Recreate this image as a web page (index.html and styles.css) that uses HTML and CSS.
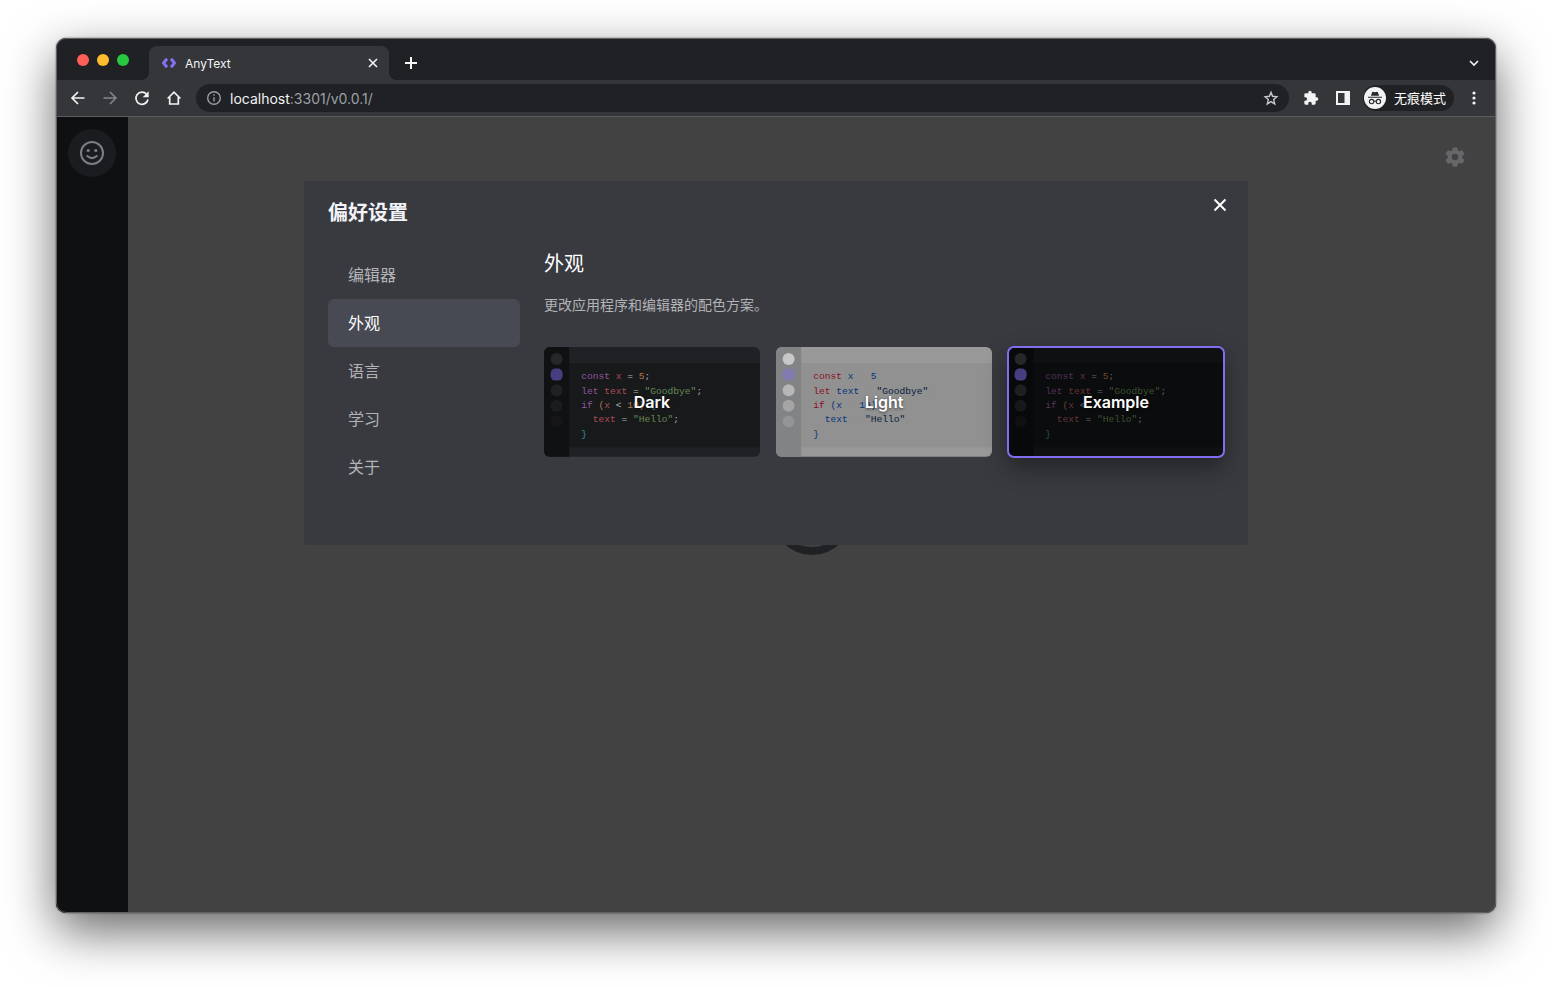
FILE: index.html
```html
<!DOCTYPE html>
<html lang="zh-CN">
<head>
<meta charset="utf-8">
<meta name="viewport" content="width=device-width, initial-scale=1">
<title>AnyText</title>
<link rel="stylesheet" href="styles.css">
</head>
<body>
<div class="window">
  <header class="tabstrip">
    <div class="lights"><span class="light red"></span><span class="light yellow"></span><span class="light green"></span></div>
    <div class="tab">
      <svg class="tab-logo" viewBox="0 0 16 16" fill="none" stroke="#8371f2" stroke-width="3" stroke-linejoin="round"><path d="M6 3.800 2.500 8 6 12.200M10 3.800 13.500 8 10 12.200"/></svg>
      <span class="tab-title">AnyText</span>
      <button class="icon-btn tab-close" aria-label="关闭标签页"><svg width="16" height="16" viewBox="0 0 16 16" fill="none" stroke="#f1f3f4" stroke-width="1.6"><path d="m4 4 8 8M12 4l-8 8"/></svg></button>
    </div>
    <button class="icon-btn new-tab" aria-label="新标签页"><svg width="16" height="16" viewBox="0 0 16 16" fill="none" stroke="#f8f8f8" stroke-width="2"><path d="M8 2v12M2 8h12"/></svg></button>
    <button class="icon-btn tab-search" aria-label="搜索标签页"><svg width="16" height="16" viewBox="0 0 16 16" fill="none" stroke="#f1f3f4" stroke-width="1.6"><path d="m4 6 4 4 4-4"/></svg></button>
  </header>
  <nav class="toolbar" aria-label="浏览器">
    <div class="nav-buttons">
      <button class="icon-btn" aria-label="后退"><svg width="16" height="16" viewBox="0 0 16 16" fill="none" stroke="#f1f3f4" stroke-width="1.7"><path d="M14.500 8H2.500M8 2 2 8l6 6"/></svg></button>
      <button class="icon-btn" aria-label="前进"><svg width="16" height="16" viewBox="0 0 16 16" fill="none" stroke="#85878a" stroke-width="1.5"><path d="M1.500 8h12M8 2l6 6-6 6"/></svg></button>
      <button class="icon-btn" aria-label="刷新"><svg width="16" height="16" viewBox="0 0 16 16"><path d="M14 9.500A6.100 6.100 0 1 1 12.700 4.200" fill="none" stroke="#f1f3f4" stroke-width="1.700"/><path d="M14.700 1.200v6H8.700z" fill="#f1f3f4"/></svg></button>
      <button class="icon-btn" aria-label="主页"><svg width="16" height="16" viewBox="0 0 16 16" fill="none" stroke="#f1f3f4" stroke-width="1.7"><path d="M1.600 8.500 8 2.200l6.400 6.300M3.700 7v7h8.600V7"/></svg></button>
    </div>
    <div class="address">
      <svg width="16" height="16" viewBox="0 0 16 16" fill="none" stroke="#9b9da1" stroke-width="1.4"><circle cx="8" cy="8" r="6.3"/><path d="M8 7.2v4.2M8 4.3v1.5"/></svg>
      <span class="url"><span class="host">localhost</span>:3301/v0.0.1/</span>
      <button class="icon-btn star" aria-label="添加书签"><svg width="16" height="16" viewBox="0 0 16 16" fill="none" stroke="#c5c7ca" stroke-width="1.4"><path d="m8 2.300 1.600 4 4.300.4-3.200 2.900 1 4.300L8 11.600l-3.700 2.300 1-4.300-3.200-2.900 4.300-.4z"/></svg></button>
    </div>
    <div class="tools">
      <button class="icon-btn" aria-label="扩展程序"><svg width="16" height="16" viewBox="0 0 24 24" fill="#f1f3f4"><path d="M20.5 11H19V7a2 2 0 0 0-2-2h-4V3.500a2.500 2.500 0 0 0-5 0V5H4a2 2 0 0 0-2 2v3.800h1.500a2.700 2.700 0 0 1 0 5.400H2V20a2 2 0 0 0 2 2h3.800v-1.500a2.700 2.700 0 0 1 5.400 0V22H17a2 2 0 0 0 2-2v-4h1.500a2.500 2.500 0 0 0 0-5z"/></svg></button>
      <button class="icon-btn" aria-label="侧边栏"><svg width="16" height="16" viewBox="0 0 16 16"><path d="M1 1h14v14H1zm2 2v10h6.500V3z" fill="#f1f3f4" fill-rule="evenodd"/></svg></button>
      <button class="profile"><svg width="22" height="22" viewBox="0 0 22 22"><circle cx="11" cy="11" r="11" fill="#f1f3f4"/><path d="M8.400 4.700 11 5.200l2.600-.5 1.500 4H6.900z" fill="#27282c"/><g fill="none" stroke="#27282c" stroke-width="1.100"><path d="M4 10.200h14M9.700 14.400q1.300-.8 2.600 0"/><circle cx="7.600" cy="14.600" r="2.200"/><circle cx="14.400" cy="14.600" r="2.200"/></g></svg><span>无痕模式</span></button>
      <button class="icon-btn" aria-label="更多"><svg width="16" height="16" viewBox="0 0 16 16" fill="#f1f3f4"><circle cx="8" cy="3" r="1.600"/><circle cx="8" cy="8" r="1.600"/><circle cx="8" cy="13" r="1.600"/></svg></button>
    </div>
  </nav>
  <div class="app">
    <aside class="sidebar">
      <button class="avatar" aria-label="用户"><svg width="24" height="24" viewBox="0 0 24 24" fill="none" stroke="#7c7d80" stroke-width="2"><circle cx="12" cy="12" r="11"/><path d="M7.200 15q4.800 4.200 9.600 0" stroke-linecap="round"/><g fill="#7c7d80" stroke="none"><circle cx="8.200" cy="9.500" r="1.600"/><circle cx="15.800" cy="9.500" r="1.600"/></g></svg></button>
    </aside>
    <main class="stage">
      <div class="ring"></div>
      <button class="settings" aria-label="设置"><svg width="24" height="24" viewBox="0 0 24 24" fill="#66676a"><path d="M19.140 12.940c.04-.3.06-.61.06-.94s-.02-.64-.07-.94l2.030-1.580a.49.49 0 0 0 .12-.61l-1.920-3.320a.49.49 0 0 0-.59-.22l-2.390.96a7 7 0 0 0-1.620-.94l-.36-2.540a.48.48 0 0 0-.48-.41h-3.840a.48.48 0 0 0-.47.41l-.36 2.540a7.300 7.300 0 0 0-1.620.94l-2.390-.96a.48.48 0 0 0-.59.22L2.740 8.870a.48.48 0 0 0 .12.610l2.030 1.580a6 6 0 0 0 0 1.880l-2.030 1.580a.49.49 0 0 0-.12.610l1.920 3.320c.12.220.37.290.59.220l2.390-.96c.5.380 1.030.7 1.620.94l.36 2.540c.05.240.24.410.48.410h3.840c.24 0 .44-.17.470-.41l.36-2.540a7 7 0 0 0 1.620-.94l2.390.96c.22.080.47 0 .59-.22l1.920-3.320a.48.48 0 0 0-.12-.61zM12 15.200a3.200 3.200 0 1 1 0-6.400 3.200 3.200 0 0 1 0 6.400z"/></svg></button>
    </main>
    <div class="overlay">
      <section class="modal" role="dialog" aria-labelledby="modal-title">
        <h1 class="modal-title" id="modal-title">偏好设置</h1>
        <button class="icon-btn modal-close" aria-label="关闭"><svg width="16" height="16" viewBox="0 0 16 16" fill="none" stroke="#fff" stroke-width="2"><path d="m2.500 2.500 11 11M13.500 2.500l-11 11"/></svg></button>
        <div class="modal-body">
          <nav class="menu" aria-label="设置分类">
            <button class="menu-item">编辑器</button>
            <button class="menu-item active" aria-current="page">外观</button>
            <button class="menu-item">语言</button>
            <button class="menu-item">学习</button>
            <button class="menu-item">关于</button>
          </nav>
          <div class="panel">
            <h2 class="panel-title">外观</h2>
            <p class="panel-desc">更改应用程序和编辑器的配色方案。</p>
            <div class="themes">
              <button class="theme dark" aria-pressed="false">
                <svg class="preview" viewBox="0 0 360 183" preserveAspectRatio="xMidYMid slice" aria-hidden="true">
                  <path class="bar" d="M0 0h360v183H0z"/><path class="editor" d="M42 27h318v140H42z"/><path class="rail" d="M0 0h42v183H0z"/>
                  <circle class="dot d1" cx="21" cy="20" r="10"/><rect class="accent" x="11" y="36" width="20" height="20" rx="8"/><circle class="dot d2" cx="21" cy="72" r="10"/><circle class="dot d3" cx="21" cy="98" r="10"/><circle class="dot d4" cx="21" cy="124" r="10"/>
                  <text x="62" y="54"><tspan class="k">const</tspan> <tspan class="v">x</tspan> <tspan class="o">=</tspan> <tspan class="n">5</tspan><tspan class="o">;</tspan></text>
                  <text x="62" y="78"><tspan class="k">let</tspan> <tspan class="v">text</tspan> <tspan class="o">=</tspan> <tspan class="s">"Goodbye"</tspan><tspan class="o">;</tspan></text>
                  <text x="62" y="102"><tspan class="k">if</tspan> <tspan class="n">(</tspan><tspan class="v">x</tspan> <tspan class="o">&lt;</tspan> <tspan class="n">10)</tspan> <tspan class="b">{</tspan></text>
                  <text x="62" y="125">&#160; <tspan class="v">text</tspan> <tspan class="o">=</tspan> <tspan class="s">"Hello"</tspan><tspan class="o">;</tspan></text>
                  <text x="62" y="150" class="b">}</text>
                </svg>
                <span class="theme-name">Dark</span>
              </button>
              <button class="theme bright" aria-pressed="false">
                <svg class="preview" viewBox="0 0 360 183" preserveAspectRatio="xMidYMid slice" aria-hidden="true">
                  <path class="bar" d="M0 0h360v183H0z"/><path class="editor" d="M42 27h318v140H42z"/><path class="rail" d="M0 0h42v183H0z"/>
                  <circle class="dot d1" cx="21" cy="20" r="10"/><rect class="accent" x="11" y="36" width="20" height="20" rx="8"/><circle class="dot d2" cx="21" cy="72" r="10"/><circle class="dot d3" cx="21" cy="98" r="10"/><circle class="dot d4" cx="21" cy="124" r="10"/>
                  <text x="62" y="54"><tspan class="k">const</tspan> <tspan class="v">x</tspan> <tspan class="o">=</tspan> <tspan class="n">5</tspan><tspan class="o">;</tspan></text>
                  <text x="62" y="78"><tspan class="k">let</tspan> <tspan class="v">text</tspan> <tspan class="o">=</tspan> <tspan class="s">"Goodbye"</tspan><tspan class="o">;</tspan></text>
                  <text x="62" y="102"><tspan class="k">if</tspan> <tspan class="n">(</tspan><tspan class="v">x</tspan> <tspan class="o">&lt;</tspan> <tspan class="n">10)</tspan></text>
                  <text x="62" y="125">&#160; <tspan class="v">text</tspan> <tspan class="o">=</tspan> <tspan class="s">"Hello"</tspan><tspan class="o">;</tspan></text>
                  <text x="62" y="150" class="b">}</text>
                </svg>
                <span class="theme-name">Light</span>
              </button>
              <button class="theme example" aria-pressed="true">
                <svg class="preview" viewBox="0 0 360 183" preserveAspectRatio="xMidYMid slice" aria-hidden="true">
                  <path class="bar" d="M0 0h360v183H0z"/><path class="editor" d="M42 27h318v140H42z"/><path class="rail" d="M0 0h42v183H0z"/>
                  <circle class="dot d1" cx="21" cy="20" r="10"/><rect class="accent" x="11" y="36" width="20" height="20" rx="8"/><circle class="dot d2" cx="21" cy="72" r="10"/><circle class="dot d3" cx="21" cy="98" r="10"/><circle class="dot d4" cx="21" cy="124" r="10"/>
                  <text x="62" y="54"><tspan class="k">const</tspan> <tspan class="v">x</tspan> <tspan class="o">=</tspan> <tspan class="n">5</tspan><tspan class="o">;</tspan></text>
                  <text x="62" y="78"><tspan class="k">let</tspan> <tspan class="v">text</tspan> <tspan class="o">=</tspan> <tspan class="s">"Goodbye"</tspan><tspan class="o">;</tspan></text>
                  <text x="62" y="102"><tspan class="k">if</tspan> <tspan class="n">(</tspan><tspan class="v">x</tspan> <tspan class="o">&lt;</tspan></text>
                  <text x="62" y="125">&#160; <tspan class="v">text</tspan> <tspan class="o">=</tspan> <tspan class="s">"Hello"</tspan><tspan class="o">;</tspan></text>
                  <text x="62" y="150" class="b">}</text>
                </svg>
                <span class="theme-name">Example</span>
              </button>
            </div>
          </div>
        </div>
      </section>
    </div>
  </div>
</div>
</body>
</html>
```

FILE: styles.css
```css
* { box-sizing: border-box; }
body {
  margin: 0;
  min-height: 100vh;
  padding: 38px 56px 74px;
  display: flex;
  background: #fff;
  font-family: Inter, "Noto Sans CJK SC", sans-serif;
}
button { font: inherit; color: inherit; background: none; border: 0; padding: 0; }
svg { display: block; flex: none; }
h1, h2, p { margin: 0; }
.window {
  position: relative;
  flex: 1;
  min-width: 0;
  display: flex;
  flex-direction: column;
  overflow: hidden;
  border-radius: 10px;
  background: #202124;
  box-shadow: 0 18px 50px rgba(0, 0, 0, .6), 0 0 2px rgba(0, 0, 0, .6);
}
.window::after {
  content: "";
  position: absolute;
  inset: 0;
  border: 1px solid #606163;
  border-radius: 10px;
  pointer-events: none;
}
.icon-btn { display: grid; place-items: center; }

.tabstrip { height: 42px; display: flex; align-items: flex-end; padding: 0 14px 0 21px; }
.lights { display: flex; gap: 8px; width: 72px; padding-bottom: 14px; }
.light { width: 12px; height: 12px; border-radius: 50%; }
.red { background: #ff5f57; }
.yellow { background: #febc2e; }
.green { background: #28c840; }
.tab {
  position: relative;
  width: 240px;
  height: 34px;
  display: flex;
  align-items: center;
  gap: 8px;
  padding: 0 8px 0 12px;
  border-radius: 8px 8px 0 0;
  background: #35363a;
  color: #f1f3f4;
  font-size: 12px;
}
.tab::before, .tab::after {
  content: "";
  position: absolute;
  bottom: 0;
  width: 8px;
  height: 8px;
}
.tab::before { left: -8px; background: radial-gradient(circle at 0 0, transparent 8px, #35363a 8px); }
.tab::after { right: -8px; background: radial-gradient(circle at 100% 0, transparent 8px, #35363a 8px); }
.tab-logo { width: 16px; height: 16px; }
.tab-close { margin-left: auto; }
.new-tab { margin-left: 14px; height: 34px; }
.tab-search { margin-left: auto; height: 34px; }

.toolbar {
  height: 37px;
  display: flex;
  align-items: center;
  padding: 0 10px 0 14px;
  background: #35363a;
  border-bottom: 1px solid #5c5d60;
}
.nav-buttons { display: flex; gap: 16px; margin-right: 14px; }
.address {
  flex: 1;
  height: 28px;
  display: flex;
  align-items: center;
  gap: 8px;
  padding: 0 10px;
  border-radius: 14px;
  background: #202124;
}
.url { color: #9aa0a6; font-size: 14px; }
.host { color: #f1f3f4; }
.star { margin-left: auto; }
.tools { display: flex; align-items: center; gap: 8px; margin-left: 10px; }
.tools .icon-btn { width: 24px; }
.profile {
  display: flex;
  align-items: center;
  gap: 8px;
  height: 26px;
  padding: 0 8px 0 1px;
  border-radius: 13px;
  background: #202124;
  color: #fff;
  font-size: 13px;
  line-height: 18px;
}
.profile span { padding-bottom: 1px; }

.app { position: relative; flex: 1; display: flex; }
.sidebar { width: 72px; padding: 12px; background: #0f1012; }
.avatar {
  width: 48px;
  height: 48px;
  display: grid;
  place-items: center;
  border-radius: 50%;
  background: #1b1c1f;
}
.stage { position: relative; flex: 1; display: grid; place-items: center; background: #424242; }
.ring { width: 80px; height: 80px; border: 8px solid #202124; border-radius: 50%; }
.settings { position: absolute; top: 28px; right: 29px; }

.overlay { position: absolute; inset: 0; display: flex; justify-content: center; align-items: flex-start; padding: 64px 24px 24px; }
.modal {
  position: relative;
  width: 100%;
  max-width: 944px;
  padding: 16px 24px 54px;
  border-radius: 2px;
  background: #393a3f;
  color: #fff;
}
.modal-title { font-size: 20px; line-height: 32px; font-weight: 700; color: #f2f3f8; }
.modal-close { position: absolute; top: 12px; right: 16px; width: 24px; height: 24px; }
.modal-body { display: flex; gap: 24px; padding-top: 22px; }
.menu { width: 192px; display: flex; flex-direction: column; }
.menu-item {
  height: 48px;
  padding: 0 20px 2px;
  border-radius: 6px;
  color: #b2b3b7;
  font-size: 16px;
  text-align: left;
}
.menu-item.active { background: #474a53; color: #fff; }
.panel { flex: 1; min-width: 0; }
.panel-title { font-size: 20px; line-height: 26px; font-weight: 400; }
.panel-desc { margin-top: 18px; color: #b2b3b7; font-size: 14px; line-height: 20px; }
.themes { display: grid; grid-template-columns: repeat(3, 1fr); gap: 16px; margin-top: 32px; }
.theme { position: relative; border-radius: 6px; }
.preview { width: 100%; height: auto; border-radius: 6px; font-family: "Liberation Mono", monospace; font-size: 16px; }
.theme-name {
  position: absolute;
  inset: 0;
  display: grid;
  place-items: center;
  color: #fff;
  font-size: 16px;
  font-weight: 600;
  text-shadow: 0 1px 3px rgba(0, 0, 0, .6);
}
.preview text { white-space: pre; }
.dark .bar { fill: #202124; }
.dark .editor { fill: #18191b; }
.dark .rail { fill: #101113; }
.dark .dot, .example .dot { fill: #26272b; }
.dark .accent, .example .accent { fill: #463e80; }
.dark .k { fill: #92559f; }
.dark .v { fill: #ab4e55; }
.dark .o { fill: #b0b2b6; }
.dark .n { fill: #b27a45; }
.dark .s { fill: #668b53; }
.dark .b { fill: #34909b; }
.d2 { opacity: .75; }
.d3 { opacity: .5; }
.d4 { opacity: .25; }

.bright .bar { fill: #999; }
.bright .editor { fill: #919191; }
.bright .rail { fill: #828385; }
.bright .dot { fill: #c8c8c8; }
.bright .accent { fill: #817cb0; }
.bright .k { fill: #8c0f1e; }
.bright .v, .bright .n, .bright .b { fill: #05347a; }
.bright .s { fill: #061a3e; }
.bright .o { fill: #8b8c8d; }

.example { box-shadow: 0 10px 24px rgba(0, 0, 0, .4); outline: 2px solid #7f6ff0; outline-offset: -1px; }
.example .bar { fill: #0f1012; }
.example .editor { fill: #0b0c0d; }
.example .rail { fill: #08090a; }
.example .k { fill: #52355b; }
.example .v { fill: #663238; }
.example .o { fill: #66676b; }
.example .n { fill: #69492b; }
.example .s { fill: #3c5330; }
.example .b { fill: #20545b; }

@media (max-width: 900px) {
  body { padding: 16px; }
  .modal-body { flex-direction: column; }
  .menu { width: 100%; }
  .themes { grid-template-columns: 1fr; }
}
```
